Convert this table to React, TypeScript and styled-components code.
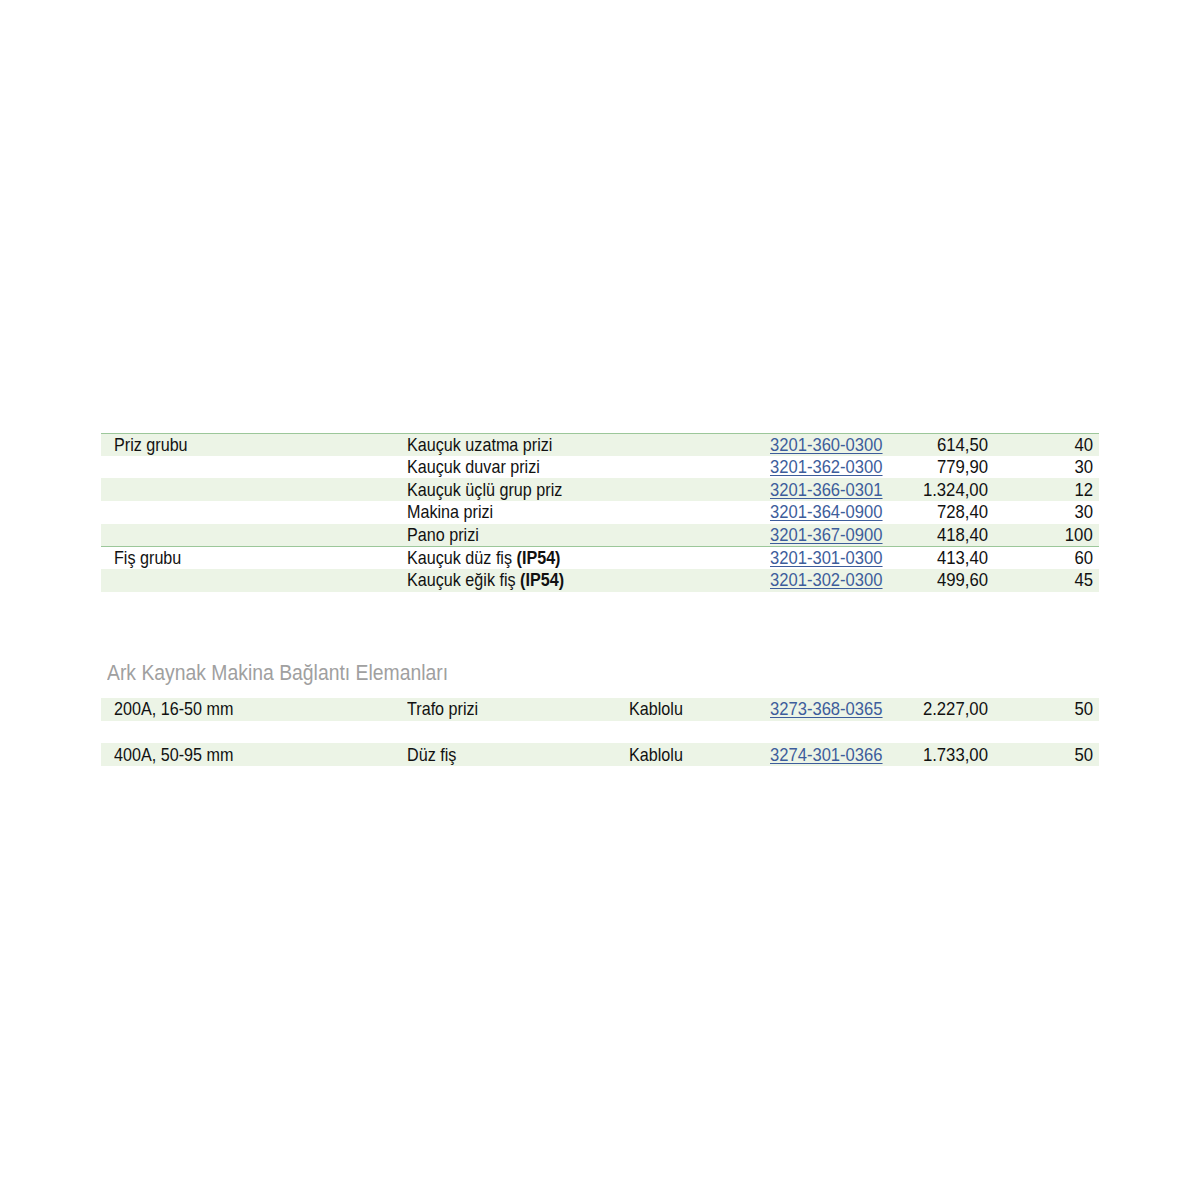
import styled, { createGlobalStyle } from "styled-components";

type Row = {
  group?: string;
  name: string;
  bold?: string;
  variant?: string;
  code: string;
  price: string;
  qty: string;
  shaded: boolean;
  divider?: boolean;
};

const prizRows: Row[] = [
  { group: "Priz grubu", name: "Kauçuk uzatma prizi", code: "3201-360-0300", price: "614,50", qty: "40", shaded: true, divider: true },
  { name: "Kauçuk duvar prizi", code: "3201-362-0300", price: "779,90", qty: "30", shaded: false },
  { name: "Kauçuk üçlü grup priz", code: "3201-366-0301", price: "1.324,00", qty: "12", shaded: true },
  { name: "Makina prizi", code: "3201-364-0900", price: "728,40", qty: "30", shaded: false },
  { name: "Pano prizi", code: "3201-367-0900", price: "418,40", qty: "100", shaded: true },
  { group: "Fiş grubu", name: "Kauçuk düz fiş ", bold: "(IP54)", code: "3201-301-0300", price: "413,40", qty: "60", shaded: false, divider: true },
  { name: "Kauçuk eğik fiş ", bold: "(IP54)", code: "3201-302-0300", price: "499,60", qty: "45", shaded: true },
];

const arkRows: (Row | null)[] = [
  { group: "200A, 16-50 mm", name: "Trafo prizi", variant: "Kablolu", code: "3273-368-0365", price: "2.227,00", qty: "50", shaded: true },
  null,
  { group: "400A, 50-95 mm", name: "Düz fiş", variant: "Kablolu", code: "3274-301-0366", price: "1.733,00", qty: "50", shaded: true },
];

const GlobalStyle = createGlobalStyle`
  body {
    margin: 0;
    background: #fff;
    font-family: "Liberation Sans", Arial, sans-serif;
    color: #111;
  }
`;

const Page = styled.div`
  width: 1200px;
  height: 1200px;
  padding: 433px 101px 0 101px;
  box-sizing: border-box;
`;

const Table = styled.div`
  display: flex;
  flex-direction: column;
`;

const TableRow = styled.div<{ $shaded: boolean; $divider?: boolean }>`
  display: grid;
  grid-template-columns: 293px 222px 141px 130px 88px 1fr;
  align-items: center;
  height: 22.7px;
  padding: 0 6px 0 13px;
  font-size: 19px;
  line-height: 22px;
  background: ${(p) => (p.$shaded ? "#ecf4e6" : "#fff")};
  border-top: ${(p) => (p.$divider ? "1px solid #9cc79a" : "none")};
  box-sizing: border-box;
`;

const Cell = styled.div<{ $right?: boolean }>`
  white-space: nowrap;
  text-align: ${(p) => (p.$right ? "right" : "left")};
`;

/* the print uses a condensed grotesque; squeeze the text horizontally */
const Narrow = styled.span<{ $right?: boolean; $scale?: number }>`
  display: inline-block;
  transform: scaleX(${(p) => p.$scale ?? 0.85});
  transform-origin: ${(p) => (p.$right ? "right" : "left")} center;
`;

const Code = styled.a`
  color: #3d5d9b;
  text-decoration: underline;
  text-underline-offset: 2px;
  white-space: nowrap;
`;

const Strong = styled.b`
  font-weight: 700;
`;

const SectionTitle = styled.h2`
  margin: 68px 0 12px 6px;
  font-size: 22px;
  line-height: 26px;
  font-weight: 400;
  color: #a0a0a0;
  white-space: nowrap;
`;

const Spacer = styled.div`
  height: 22.7px;
`;

const ProductRow = ({ row }: { row: Row }) => (
  <TableRow $shaded={row.shaded} $divider={row.divider}>
    <Cell>
      <Narrow>{row.group}</Narrow>
    </Cell>
    <Cell>
      <Narrow>
        {row.name}
        {row.bold && <Strong>{row.bold}</Strong>}
      </Narrow>
    </Cell>
    <Cell>
      <Narrow>{row.variant}</Narrow>
    </Cell>
    <Cell>
      <Narrow $scale={0.873}>
        <Code href="#">{row.code}</Code>
      </Narrow>
    </Cell>
    <Cell $right>
      <Narrow $right $scale={0.88}>
        {row.price}
      </Narrow>
    </Cell>
    <Cell $right>
      <Narrow $right $scale={0.88}>
        {row.qty}
      </Narrow>
    </Cell>
  </TableRow>
);

const App = () => (
  <>
    <GlobalStyle />
    <Page>
      <Table>
        {prizRows.map((r) => (
          <ProductRow key={r.code} row={r} />
        ))}
      </Table>
      <SectionTitle>
        <Narrow $scale={0.88}>Ark Kaynak Makina Bağlantı Elemanları</Narrow>
      </SectionTitle>
      <Table>
        {arkRows.map((r, i) => (r ? <ProductRow key={r.code} row={r} /> : <Spacer key={i} />))}
      </Table>
    </Page>
  </>
);

export default App;
